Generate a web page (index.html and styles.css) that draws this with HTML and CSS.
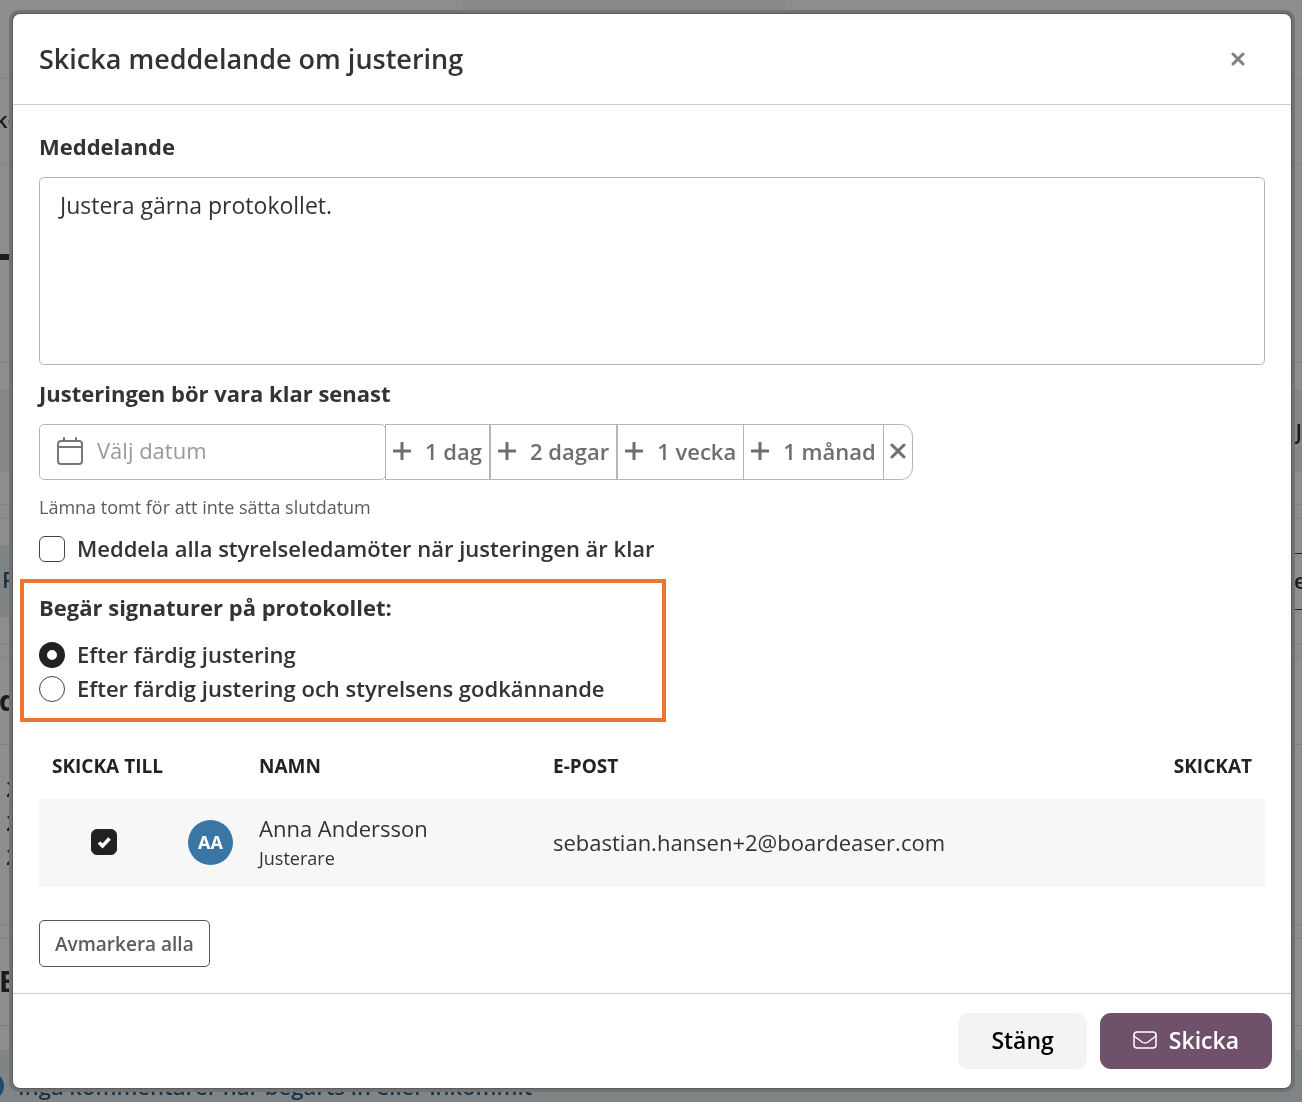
FILE: index.html
```html
<!DOCTYPE html>
<html lang="sv">
<head>
    <meta charset="UTF-8">
    <meta name="viewport" content="width=device-width, initial-scale=1.0">
    <title>Skicka meddelande om justering</title>
    <link rel="stylesheet" href="styles.css">
</head>
<body>
    <!-- Page behind the dialog -->
    <div class="page" aria-hidden="true">
        <div class="page-top"><div class="page-tab"></div></div>
        <div class="page-nav">ko</div>
        <div class="page-hero"><div class="page-underline"></div></div>
        <div class="page-card">
            <div class="page-band"><span>J</span></div>
        </div>
        <div class="page-card page-card-info">
            <div class="page-info">F</div>
            <div class="page-field">e</div>
        </div>
        <div class="page-card">
            <div class="page-heading">d</div>
            <div class="page-list">
                <div>2</div>
                <div>2</div>
                <div>2</div>
            </div>
        </div>
        <div class="page-card">
            <div class="page-heading">E</div>
            <div class="page-comments">
                <span class="page-dot"></span>
                <span>Inga kommentarer har begärts in eller inkommit</span>
            </div>
        </div>
    </div>

    <div class="overlay">
        <form class="modal" role="dialog" aria-labelledby="modal-title">
            <div class="modal-header">
                <h1 id="modal-title">Skicka meddelande om justering</h1>
                <button type="button" class="close-btn" aria-label="Stäng dialogen">
                    <svg width="14" height="14" viewBox="0 0 14 14"><path d="M2 2l10 10M12 2L2 12"/></svg>
                </button>
            </div>

            <div class="modal-body">
                <label class="field-label" for="message">Meddelande</label>
                <textarea id="message" class="message">Justera gärna protokollet.</textarea>

                <label class="field-label" for="date">Justeringen bör vara klar senast</label>
                <div class="date-group">
                    <div class="date-field">
                        <svg class="calendar" width="26" height="28" viewBox="0 0 26 28">
                            <rect x="1" y="4" width="24" height="23" rx="3"/>
                            <path d="M1 10h24M7 1v3M19 1v3"/>
                        </svg>
                        <input type="text" id="date" placeholder="Välj datum">
                    </div>
                    <button type="button" class="quick-btn">
                        <svg width="18" height="18" viewBox="0 0 18 18"><path d="M9 1v16M1 9h16"/></svg>
                        1 dag
                    </button>
                    <button type="button" class="quick-btn">
                        <svg width="18" height="18" viewBox="0 0 18 18"><path d="M9 1v16M1 9h16"/></svg>
                        2 dagar
                    </button>
                    <button type="button" class="quick-btn">
                        <svg width="18" height="18" viewBox="0 0 18 18"><path d="M9 1v16M1 9h16"/></svg>
                        1 vecka
                    </button>
                    <button type="button" class="quick-btn joined">
                        <svg width="18" height="18" viewBox="0 0 18 18"><path d="M9 1v16M1 9h16"/></svg>
                        1 månad
                    </button>
                    <button type="button" class="quick-btn joined clear" aria-label="Rensa datum">
                        <svg width="16" height="16" viewBox="0 0 16 16"><path d="M2 2l12 12M14 2L2 14"/></svg>
                    </button>
                </div>
                <p class="help">Lämna tomt för att inte sätta slutdatum</p>

                <label class="choice">
                    <input type="checkbox">
                    Meddela alla styrelseledamöter när justeringen är klar
                </label>

                <fieldset class="signatures">
                    <legend class="field-label">Begär signaturer på protokollet:</legend>
                    <label class="choice">
                        <input type="radio" name="signatures" checked>
                        Efter färdig justering
                    </label>
                    <label class="choice">
                        <input type="radio" name="signatures">
                        Efter färdig justering och styrelsens godkännande
                    </label>
                </fieldset>

                <table class="recipients">
                    <thead>
                        <tr>
                            <th class="col-check">SKICKA TILL</th>
                            <th class="col-avatar"></th>
                            <th class="col-name">NAMN</th>
                            <th>E-POST</th>
                            <th class="col-sent">SKICKAT</th>
                        </tr>
                    </thead>
                    <tbody>
                        <tr>
                            <td class="col-check"><input type="checkbox" aria-label="Skicka till Anna Andersson" checked></td>
                            <td class="col-avatar"><span class="avatar">AA</span></td>
                            <td class="col-name">
                                <div>Anna Andersson</div>
                                <div class="role">Justerare</div>
                            </td>
                            <td>sebastian.hansen+2@boardeaser.com</td>
                            <td class="col-sent"></td>
                        </tr>
                    </tbody>
                </table>

                <button type="button" class="outline-btn">Avmarkera alla</button>
            </div>

            <div class="modal-footer">
                <button type="button" class="btn">Stäng</button>
                <button type="submit" class="btn btn-primary">
                    <svg width="24" height="18" viewBox="0 0 24 18">
                        <rect x="1" y="1" width="22" height="16" rx="3"/>
                        <path d="M1 5l8 6q3 2 6 0l8-6"/>
                    </svg>
                    Skicka
                </button>
            </div>
        </form>
    </div>
</body>
</html>
```
FILE: styles.css
```css
* {
    box-sizing: border-box;
}

body {
    margin: 0;
    font-family: "Open Sans", "Noto Sans", sans-serif;
    font-size: 22px;
    color: #333;
    background-color: #fcfcfc;
}

button, input, textarea {
    font: inherit;
    color: inherit;
}

svg {
    fill: none;
    stroke: currentColor;
    stroke-linecap: round;
    flex-shrink: 0;
}

/* Page behind the dialog */
.page {
    position: fixed;
    inset: 0;
    overflow: hidden;
    font-weight: 600;
    line-height: 32px;
}

.page-top {
    height: 79px;
    border-bottom: 1px solid #eee;
}

.page-tab {
    width: 322px;
    height: 40px;
    margin-left: 463px;
    background-color: #f3f3f3;
}

.page-nav {
    height: 85px;
    padding-top: 24px;
    border-bottom: 1px solid #eee;
    text-indent: -5px;
}

.page-hero {
    height: 198px;
    padding-top: 90px;
}

.page-underline {
    width: 40px;
    height: 6px;
    background-color: #333;
}

.page-card {
    margin-bottom: 13px;
    border: solid #e8e8e8;
    border-width: 1px 0;
    background-color: #fefefe;
}

.page-band {
    display: flex;
    justify-content: flex-end;
    align-items: center;
    height: 83px;
    margin: 26px 0 32px;
    background-color: #f0f0f0;
}

.page-card-info {
    display: flex;
    justify-content: space-between;
    padding: 26px 0;
}

.page-info {
    width: 50%;
    padding: 18px 2px 22px;
    background-color: #e2edf1;
    color: #35587a;
}

.page-field {
    height: 57px;
    margin-top: 8px;
    padding: 10px 0;
    width: 8px;
    border: solid #444;
    border-width: 1px 0;
}

.page-heading {
    height: 87px;
    padding-top: 26px;
    border-bottom: 1px solid #e2e2e2;
    font-size: 28px;
    font-weight: 700;
    text-indent: -1px;
}

.page-list {
    height: 179px;
    padding: 26px 6px;
    line-height: 34px;
}

.page-comments {
    display: flex;
    align-items: center;
    gap: 14px;
    margin-top: 24px;
    padding: 20px 0;
    background-color: #e2edf1;
    color: #35587a;
}

.page-dot {
    width: 28px;
    height: 28px;
    margin-left: -24px;
    border-radius: 50%;
    background-color: #3f86c0;
}

/* Dialog */
.overlay {
    position: absolute;
    inset: 0;
    padding: 14px 11px 14px 13px;
    background-color: rgba(0, 0, 0, 0.44);
}

.modal {
    background-color: #fff;
    border-radius: 7px;
    box-shadow: 0 0 0 1px rgba(0, 0, 0, 0.2), 0 0 0 4px #727272;
}

.modal-header {
    display: flex;
    justify-content: space-between;
    align-items: center;
    padding: 27px 39px 27px 26px;
    border-bottom: 1px solid #ccc;
}

h1 {
    margin: 0;
    font-size: 27px;
    font-weight: 600;
    line-height: 36px;
}

.close-btn {
    display: flex;
    padding: 7px;
    border: 0;
    background: none;
    color: #808080;
    stroke-width: 3;
    cursor: pointer;
}

.modal-body {
    padding: 24px 26px 26px;
}

.field-label {
    display: block;
    margin-bottom: 14px;
    padding: 0;
    font-weight: 700;
    line-height: 34px;
}

.message {
    display: block;
    width: 100%;
    height: 188px;
    margin-bottom: 11px;
    padding: 10px 20px;
    border: 1px solid #b5b5b5;
    border-radius: 5px;
    background-color: #fff;
    font-size: 23px;
    line-height: 34px;
    resize: none;
}

.date-group {
    display: flex;
    height: 56px;
}

.date-field {
    display: flex;
    align-items: center;
    gap: 14px;
    width: 347px;
    padding: 0 17px 2px;
    border: 1px solid #b5b5b5;
    border-radius: 5px;
}

.date-field input {
    flex: 1;
    min-width: 0;
    padding: 0 0 2px;
    border: 0;
    outline: 0;
}

.date-field input::placeholder {
    color: #999;
}

.calendar {
    color: #777;
    stroke-width: 2;
}

.quick-btn {
    display: flex;
    align-items: center;
    gap: 14px;
    padding: 0 7px 2px;
    border: 1px solid #b5b5b5;
    background-color: #fff;
    color: #6e6e6e;
    font-weight: 600;
    stroke-width: 3;
    white-space: nowrap;
    cursor: pointer;
}

.date-field + .quick-btn,
.joined {
    margin-left: -1px;
}

.clear {
    padding: 0 6px 2px;
    border-radius: 0 12px 12px 0;
}

.help {
    margin: 14px 0 12px;
    color: #5c5c5c;
    font-size: 18px;
    line-height: 26px;
}

input[type="checkbox"],
input[type="radio"] {
    appearance: none;
    flex-shrink: 0;
    width: 26px;
    height: 26px;
    margin: 0;
    border: 1px solid #444;
    background-color: #fff;
}

input[type="checkbox"] {
    border-radius: 6px;
}

input[type="radio"] {
    border-radius: 50%;
}

input[type="radio"]:checked {
    border: 8px solid #222;
}

input[type="checkbox"]:checked {
    border-color: #222;
    background: #222 url("data:image/svg+xml,%3Csvg xmlns='http://www.w3.org/2000/svg' viewBox='0 0 26 26'%3E%3Cpath d='M8 13.5l3.5 3.5L18.5 9.5' fill='none' stroke='white' stroke-width='3.5'/%3E%3C/svg%3E") center / 26px no-repeat;
}

.choice {
    display: flex;
    gap: 12px;
    min-height: 34px;
    font-weight: 600;
    line-height: 32px;
}

.choice input[type] {
    margin-top: 4px;
}

.signatures {
    width: fit-content;
    margin: 13px 0 0 -19px;
    padding: 7px 57px 12px 15px;
    border: 4px solid #ed7430;
}

.signatures legend {
    float: left;
}

.signatures .choice {
    clear: both;
}

.recipients {
    width: 100%;
    margin: 11px 0 33px;
    border-collapse: collapse;
    table-layout: fixed;
}

.recipients th {
    padding: 20px 13px;
    color: #222;
    font-size: 19px;
    font-weight: 700;
    line-height: 26px;
    text-align: left;
    white-space: nowrap;
}

.recipients td {
    height: 88px;
    padding: 0 13px 2px;
    background-color: #f7f7f7;
    line-height: 30px;
}

.recipients .col-check {
    width: 130px;
}

.recipients .col-check input {
    display: block;
    margin: 0 auto;
}

.recipients .col-avatar {
    width: 77px;
    padding-left: 19px;
}

.recipients .col-name {
    width: 294px;
}

.recipients td.col-name {
    padding-bottom: 0;
}

.recipients .col-sent {
    width: 130px;
    text-align: right;
}

.avatar {
    display: flex;
    align-items: center;
    justify-content: center;
    width: 45px;
    height: 45px;
    border-radius: 50%;
    background-color: #3976a3;
    color: #fff;
    font-size: 18px;
    font-weight: 700;
}

.role {
    font-size: 18px;
}

.outline-btn {
    display: block;
    height: 47px;
    padding: 0 15px;
    border: 1px solid #555;
    border-radius: 5px;
    background-color: #fff;
    color: #5c5c5c;
    font-size: 19px;
    font-weight: 600;
    cursor: pointer;
}

.modal-footer {
    display: flex;
    justify-content: flex-end;
    gap: 13px;
    padding: 19px;
    border-top: 1px solid #ccc;
}

.btn {
    display: flex;
    align-items: center;
    gap: 12px;
    height: 56px;
    padding: 0 33px 2px;
    border: 0;
    border-radius: 11px;
    background-color: #f3f3f3;
    color: #000;
    font-size: 23px;
    font-weight: 600;
    cursor: pointer;
}

.btn-primary {
    background-color: #70516b;
    color: #fff;
    stroke-width: 1.5;
}
```
